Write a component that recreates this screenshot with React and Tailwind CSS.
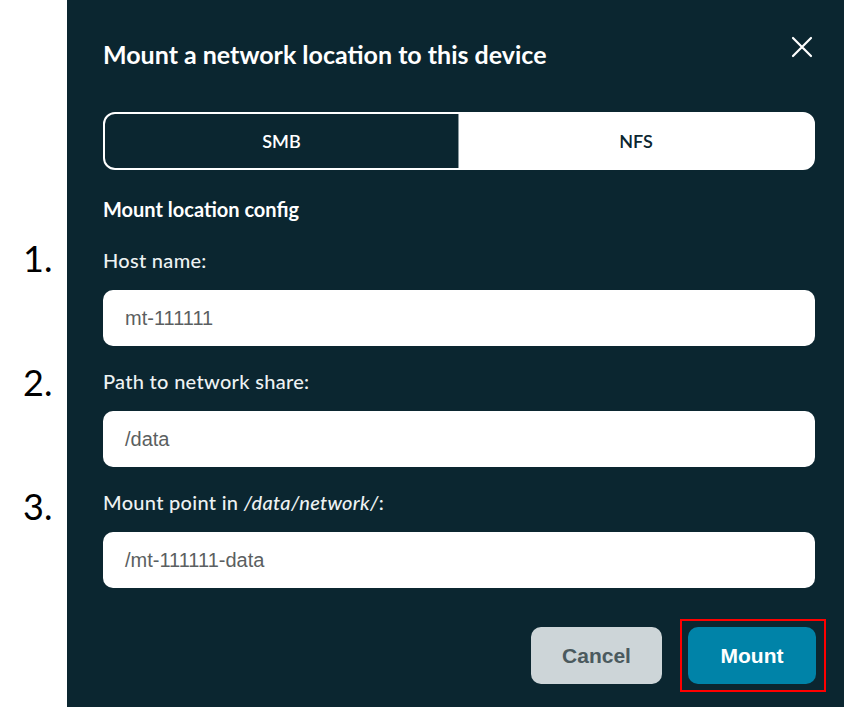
const fields = [
    { num: '1.', label: 'Host name:', value: 'mt-111111' },
    { num: '2.', label: 'Path to network share:', value: '/data' },
    { num: '3.', label: <>Mount point in <i>/data/network/</i>:</>, value: '/mt-111111-data' },
]

export default function App() {
    return (
        <div className="flex w-[844px] h-[707px] bg-white overflow-hidden">
            {/* step numbers */}
            <div className="w-[67px] shrink-0 pl-[23px] pt-[240px] flex flex-col gap-[88px] text-black font-['Lato',sans-serif] text-[36px] leading-[36px]">
                {fields.map((f) => (
                    <div key={f.num}>{f.num}</div>
                ))}
            </div>

            {/* dialog */}
            <div className="flex-1 bg-[#0b2630] pl-[36px] pr-[29px] pt-[38px] font-['Lato',sans-serif] text-white">
                <div className="flex items-start justify-between h-[32px]">
                    <h2 className="text-[25px] leading-[32px] font-bold">Mount a network location to this device</h2>
                    <svg width="22" height="22" viewBox="0 0 22 22" className="mt-[-2px] mr-[2px]" fill="none" stroke="white" strokeWidth="2.2" strokeLinecap="round">
                        <path d="M2 2 L20 20 M20 2 L2 20" />
                    </svg>
                </div>

                {/* SMB / NFS toggle */}
                <div className="mt-[42px] h-[58px] grid grid-cols-2 rounded-[12px] border-2 border-white bg-white">
                    <div className="flex items-center justify-center rounded-l-[10px] bg-[#0b2630] border-r border-[#8a999e] text-[18px] font-semibold">
                        SMB
                    </div>
                    <div className="flex items-center justify-center text-[18px] font-semibold text-[#0b2630]">
                        NFS
                    </div>
                </div>

                <div className="mt-[27px] h-[24px] leading-[24px] text-[20px] font-bold">Mount location config</div>

                <div className="mt-[27px] flex flex-col gap-[23px]">
                    {fields.map((f) => (
                        <div key={f.num} className="flex flex-col">
                            <div className="h-[24px] leading-[24px] text-[20px] tracking-[0.3px] font-medium text-[#eef2f3]">{f.label}</div>
                            <div className="mt-[18px] h-[56px] rounded-[10px] bg-white flex items-center pl-[22px] font-['Liberation_Sans',Arial,sans-serif] text-[20px] text-[#5b5f61]">
                                {f.value}
                            </div>
                        </div>
                    ))}
                </div>

                <div className="mt-[39px] flex justify-end gap-[18px] font-['Liberation_Sans',Arial,sans-serif] font-bold text-[21px]">
                    <button className="w-[131px] h-[57px] rounded-[10px] bg-[#cdd5d8] text-[#4b5a5e]">Cancel</button>
                    <div className="-my-[8px] -mr-[11px] pl-[6px] pr-[8px] py-[6px] border-2 border-[#ff0000]">
                        <button className="w-[128px] h-[57px] rounded-[10px] bg-[#0083a8] text-white">Mount</button>
                    </div>
                </div>
            </div>
        </div>
    )
}
